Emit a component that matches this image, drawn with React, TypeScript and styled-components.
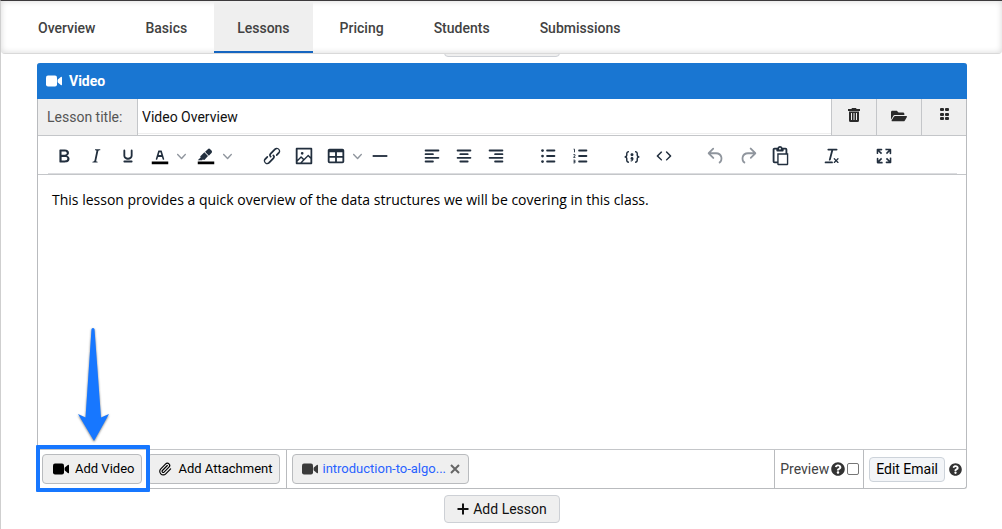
import React from "react";
import styled, { createGlobalStyle, css } from "styled-components";
import { FaFolderOpen, FaQuestionCircle } from "react-icons/fa";
import { Paperclip } from "lucide-react";

const line = "#c4c6c9";
const ink = "#222f3e";

const GlobalStyle = createGlobalStyle`
  * { box-sizing: border-box; }
  body {
    margin: 0;
    background: #fff;
    color: #333;
    font-family: Roboto, "Liberation Sans", sans-serif;
    font-size: 14px;
    line-height: 20px;
  }
  button, input { font: inherit; color: inherit; margin: 0; }
  button { cursor: pointer; }
  svg { display: block; flex: none; }
`;

const Page = styled.div`
  border-top: 1px solid #3c3a3c;
  border-left: 1px solid #cfcfcf;
  min-height: 100vh;
`;

const Tabs = styled.nav`
  display: flex;
  gap: 4px;
  height: 53px;
  padding-left: 14px;
  border-bottom: 1px solid #d9d9d9;
  border-radius: 0 0 4px 4px;
  box-shadow: inset 0 0 6px rgba(0, 0, 0, 0.16);
`;

const Tab = styled.a<{ $active?: boolean }>`
  display: flex;
  align-items: center;
  padding: 4px 23px 0;
  color: #424242;
  font-weight: 500;
  text-decoration: none;
  border-bottom: 2px solid transparent;
  ${(p) =>
    p.$active &&
    css`
      background: #efefef;
      border-bottom-color: #1565c0;
    `}
`;

const Main = styled.main`
  padding: 0 35px 0 36px;
`;

const ScrolledRow = styled.div`
  display: flex;
  justify-content: center;
  align-items: flex-end;
  height: 3px;
  margin-bottom: 6px;
  overflow: hidden;
`;

const SoftButton = styled.button`
  display: flex;
  align-items: center;
  justify-content: center;
  gap: 4px;
  width: 116px;
  height: 28px;
  flex: none;
  padding: 0;
  border: 1px solid #cdd0d5;
  border-radius: 4px;
  background: #efefef;
  color: #111;
`;

const Panel = styled.section`
  border: 1px solid #b9bbbe;
  border-top: 0;
  border-radius: 3px;
`;

const PanelHeader = styled.h2`
  display: flex;
  align-items: center;
  gap: 7px;
  height: 36px;
  margin: 0 -1px;
  padding: 0 9px;
  border-radius: 3px 3px 0 0;
  background: #1976d2;
  color: #fff;
  font-size: 14px;
  font-weight: 700;
`;

const TitleRow = styled.div`
  display: flex;
  height: 37px;
  border-bottom: 1px solid ${line};
`;

const TitleLabel = styled.label`
  display: flex;
  align-items: center;
  width: 100px;
  padding-left: 9px;
  border-right: 1px solid ${line};
  background: #efefef;
  color: #555;
`;

const TitleInput = styled.input`
  flex: 1;
  min-width: 0;
  margin-bottom: 1px;
  padding: 2px 4px 0;
  border: 0;
  border-bottom: 1px solid #eee;
  outline: 0;
  color: #111;
`;

const TitleAction = styled.button`
  display: flex;
  justify-content: center;
  width: 45px;
  padding: 9px 1px 0 0;
  border: 0;
  border-left: 1px solid ${line};
  background: #efefef;
  color: #2a2a2a;
`;

const ToolbarWrap = styled.div`
  padding: 0 9px 0 10px;
  border-bottom: 1px solid ${line};
`;

const Toolbar = styled.div`
  display: flex;
  gap: 20px;
  height: 38px;
  border-bottom: 1px solid #dcdde0;
`;

const ToolGroup = styled.div`
  display: flex;
`;

const Tool = styled.button<{ $width?: number; $muted?: boolean }>`
  display: flex;
  align-items: center;
  gap: 6px;
  width: ${(p) => p.$width ?? 32}px;
  padding: 3px 0 0 5px;
  border: 0;
  background: none;
  color: ${(p) => (p.$muted ? "#8f959d" : ink)};
`;

const Editor = styled.div`
  min-height: 274px;
  padding: 14px;
  color: #000;
  font-family: "Open Sans", "Noto Sans", sans-serif;
  font-size: 14px;
  line-height: 22px;
  outline: 0;
`;

const Footer = styled.div`
  display: flex;
  height: 39px;
  border-top: 1px solid ${line};
`;

const FooterCell = styled.div<{ $grow?: boolean; $gap: number }>`
  display: flex;
  align-items: center;
  gap: ${(p) => p.$gap}px;
  flex: ${(p) => (p.$grow ? "1" : "none")};
  padding: 0 4px 0 5px;
  & + & {
    border-left: 1px solid #b9bbbe;
  }
`;

const Actions = styled(FooterCell)`
  padding: 0 6px 0 4px;
`;

const FileButton = styled.button`
  display: flex;
  align-items: center;
  gap: 6px;
  height: 30px;
  padding: 0 7px 0 10px;
  border: 1px solid #b9bbbe;
  border-radius: 4px;
  background: #efefef;
  color: #000;
  font-size: 13px;
`;

const Chip = styled.div`
  display: flex;
  align-items: center;
  gap: 4px;
  height: 30px;
  width: 177px;
  padding: 0 8px 0 9px;
  border: 1px solid #b9bbbe;
  border-radius: 4px;
  background: #efefef;
  color: #3a3a3a;
`;

const ChipLink = styled.a`
  flex: 1;
  color: #2962ff;
  font-size: 13px;
  text-decoration: none;
  white-space: nowrap;
`;

const ChipClose = styled.button`
  padding: 0;
  border: 0;
  background: none;
  color: #666;
`;

const PreviewLabel = styled.label`
  color: #424242;
`;

const Check = styled.input`
  appearance: none;
  width: 12px;
  height: 12px;
  border: 1px solid #767676;
  border-radius: 2px;
  background: #fff;
`;

const EmailButton = styled.button`
  height: 25px;
  padding: 0 6px;
  border: 1px solid #cdd3da;
  border-radius: 4px;
  background: #f3f5f8;
  color: #000;
  line-height: 22px;
`;

const Highlighted = styled.div`
  position: relative;
`;

const HighlightBox = styled.div`
  position: absolute;
  z-index: 1;
  inset: -9px -8px -8px -6px;
  border: 4px solid #1777ff;
  border-radius: 1px;
  pointer-events: none;
`;

const Arrow = styled.svg`
  position: absolute;
  left: 34px;
  bottom: 43px;
  pointer-events: none;
  overflow: visible;
  filter: drop-shadow(0 1px 1px rgba(0, 0, 0, 0.5));
`;

const AddRow = styled.div`
  display: flex;
  justify-content: center;
  padding: 6px 0;
`;

const Icon = ({ children }: { children: React.ReactNode }) => (
  <svg width="22" height="22" viewBox="0 0 24 24" fill="currentColor" fillRule="evenodd">
    {children}
  </svg>
);

const Chevron = () => (
  <svg width="9" height="9" viewBox="0 0 10 10" fill="#8f959d">
    <path d="M8.7 2.2c.3-.3.8-.3 1 0 .4.4.4.9 0 1.2L5.7 7.8c-.3.3-.9.3-1.2 0L.2 3.4a.8.8 0 0 1 0-1.2c.3-.3.8-.3 1.1 0L5 6l3.7-3.8Z" />
  </svg>
);

type ToolDef = {
  name: string;
  icon: React.ReactNode;
  width?: number;
  menu?: boolean;
  muted?: boolean;
};

const row = (x: number, y: number, w: number) => (
  <rect key={y} x={x} y={y} width={w} height="2" rx="1" />
);

const groups: ToolDef[][] = [
  [
    {
      name: "Bold",
      icon: (
        <path d="M7.8 19c-.3 0-.5 0-.6-.2l-.2-.5V5.7c0-.2 0-.4.2-.5l.6-.2h5c1.5 0 2.7.3 3.5 1 .7.6 1.1 1.4 1.1 2.5a3 3 0 0 1-.6 1.9c-.4.6-1 1-1.6 1.2.4.1.9.3 1.3.6s.8.7 1 1.2c.4.4.5 1 .5 1.6 0 1.3-.4 2.3-1.3 3-.8.7-2.1 1-3.8 1H7.8Zm5-8.3c.6 0 1.2-.1 1.6-.5.4-.3.6-.7.6-1.3 0-1.1-.8-1.7-2.3-1.7H9.3v3.5h3.4Zm.5 6c.7 0 1.3-.1 1.7-.4.4-.4.6-.9.6-1.5s-.2-1-.7-1.4c-.4-.3-1-.4-2-.4H9.4v3.8h4Z" />
      ),
    },
    {
      name: "Italic",
      icon: (
        <path d="m16.7 4.7-.1.9h-.3c-.6 0-1 0-1.4.3-.3.3-.4.6-.5 1.1l-2.1 9.8v.6c0 .5.4.8 1.4.8h.2l-.2.8H8l.2-.8h.2c1.1 0 1.8-.5 2-1.5l2-9.8.1-.5c0-.6-.4-.8-1.4-.8h-.3l.2-.9h5.8Z" />
      ),
    },
    {
      name: "Underline",
      icon: (
        <path d="M16 5c.6 0 1 .4 1 1v5.5a4 4 0 0 1-.4 1.8l-1 1.4a5.3 5.3 0 0 1-5.5 1 5 5 0 0 1-1.6-1c-.5-.4-.8-.9-1.1-1.4a4 4 0 0 1-.4-1.8V6c0-.6.4-1 1-1s1 .4 1 1v5.5c0 .3 0 .6.2 1l.6.7a3.3 3.3 0 0 0 2.2.8 3.4 3.4 0 0 0 2.2-.8c.3-.2.4-.5.6-.8l.2-.9V6c0-.6.4-1 1-1ZM8 17h8c.6 0 1 .4 1 1s-.4 1-1 1H8a1 1 0 0 1 0-2Z" />
      ),
    },
    {
      name: "Text color",
      width: 46,
      menu: true,
      icon: (
        <>
          <path fill="#000" d="M3 18h18v3H3z" />
          <path d="M8.7 16h-.8a.5.5 0 0 1-.5-.6l2.7-9c.1-.3.3-.4.5-.4h2.8c.2 0 .4.1.5.4l2.7 9a.5.5 0 0 1-.5.6h-.8a.5.5 0 0 1-.4-.4l-.7-2.2c0-.3-.3-.4-.5-.4h-3.4c-.2 0-.4.1-.5.4l-.7 2.2c0 .3-.2.4-.4.4Zm2.6-7.6-.6 2a.5.5 0 0 0 .5.6h1.6a.5.5 0 0 0 .5-.6l-.6-2c0-.3-.3-.4-.5-.4h-.4c-.2 0-.4.1-.5.4Z" />
        </>
      ),
    },
    {
      name: "Background color",
      width: 46,
      menu: true,
      icon: (
        <>
          <path fill="#000" d="M3 18h18v3H3z" />
          <path d="M7.7 16.7H3l3.3-3.3-.7-.8L10.2 8l4 4.1-4 4.2c-.2.2-.6.2-.8 0l-.6-.7-1.1 1.1Zm5-7.5L11 7.4l3-2.9a2 2 0 0 1 2.6 0L18 6c.7.7.7 2 0 2.7l-2.9 2.9-1.8-1.8-.6-.6Z" />
        </>
      ),
    },
  ],
  [
    {
      name: "Link",
      icon: (
        <path d="M6.2 12.3a1 1 0 0 1 1.4 1.4l-2 2a2 2 0 1 0 2.6 2.8l4.8-4.8a1 1 0 0 0 0-1.4 1 1 0 1 1 1.4-1.3 2.9 2.9 0 0 1 0 4L9.6 20a3.9 3.9 0 0 1-5.5-5.5l2-2Zm11.6-.6a1 1 0 0 1-1.4-1.4l2-2a2 2 0 1 0-2.6-2.8L11 10.3a1 1 0 0 0 0 1.4A1 1 0 1 1 9.6 13a2.9 2.9 0 0 1 0-4L14.4 4a3.9 3.9 0 0 1 5.5 5.5l-2 2Z" />
      ),
    },
    {
      name: "Image",
      icon: (
        <path d="m5 15.7 3.3-3.2c.3-.3.7-.3 1 0L12 15l4.1-4c.3-.4.8-.4 1 0l2 1.9V5H5v10.7ZM5 18V19h3l2.8-2.9-2-2L5 17.9Zm14-3-2.5-2.4-6.4 6.5H19v-4ZM4 3h16c.6 0 1 .4 1 1v16c0 .6-.4 1-1 1H4a1 1 0 0 1-1-1V4c0-.6.4-1 1-1Zm6 7.500a1.500 1.500 0 1 1 0-3 1.500 1.500 0 0 1 0 3Z" />
      ),
    },
    {
      name: "Table",
      width: 44,
      menu: true,
      icon: (
        <path d="M19 4a2 2 0 0 1 2 2v12a2 2 0 0 1-2 2H5a2 2 0 0 1-2-2V6c0-1.100.9-2 2-2h14ZM5 14v4h6v-4H5Zm14 0h-6v4h6v-4Zm0-6h-6v4h6V8ZM5 12h6V8H5v4Z" />
      ),
    },
    { name: "Horizontal line", icon: <path d="M4 11h16v2H4z" /> },
  ],
  [
    {
      name: "Align left",
      icon: [row(4, 5, 16), row(4, 9, 10), row(4, 13, 16), row(4, 17, 10)],
    },
    {
      name: "Align center",
      icon: [row(4, 5, 16), row(7, 9, 10), row(4, 13, 16), row(7, 17, 10)],
    },
    {
      name: "Align right",
      icon: [row(4, 5, 16), row(10, 9, 10), row(4, 13, 16), row(10, 17, 10)],
    },
  ],
  [
    {
      name: "Bullet list",
      icon: (
        <>
          {[5, 11, 17].map((y) => row(10, y, 10))}
          {[6, 12, 18].map((y) => (
            <circle key={y} cx="6" cy={y} r="1.5" />
          ))}
        </>
      ),
    },
    {
      name: "Numbered list",
      icon: (
        <>
          {[5, 11, 17].map((y) => row(10, y, 10))}
          <path
            fill="none"
            stroke="currentColor"
            d="M5 4.500h1V8M4.800 10.500h1.700v1.200L5 13.500h2M4.800 16.500h1.700v3H4.800M5 18h1.500"
          />
        </>
      ),
    },
  ],
  [
    {
      name: "Code sample",
      icon: (
        <path d="M7.100 11a2.800 2.800 0 0 1-.8 2 2.800 2.800 0 0 1 .8 2v1.700c0 .3.1.6.4.8.2.3.5.4.8.4.3 0 .4.2.4.4v.8c0 .2-.1.4-.4.4-.7 0-1.400-.3-2-.8-.5-.6-.8-1.300-.8-2V15c0-.3-.1-.6-.4-.8-.2-.3-.5-.4-.8-.4a.4.4 0 0 1-.4-.4v-.8c0-.2.2-.4.4-.4.3 0 .6-.1.8-.4.3-.2.4-.5.4-.8V9.300c0-.7.3-1.400.8-2 .6-.5 1.300-.8 2-.8.3 0 .4.2.4.4v.8c0 .2-.1.4-.4.4-.3 0-.6.1-.8.4-.3.2-.4.5-.4.8V11Zm9.800 0V9.300c0-.3-.1-.6-.4-.8-.2-.3-.5-.4-.8-.4a.4.4 0 0 1-.4-.4V7c0-.2.1-.4.4-.4.7 0 1.400.3 2 .8.5.6.8 1.300.8 2V11c0 .3.1.6.4.8.2.3.5.4.8.4.2 0 .4.2.4.4v.8c0 .2-.2.4-.4.4-.3 0-.6.1-.8.4-.3.2-.4.5-.4.8v1.700c0 .7-.3 1.400-.8 2-.6.5-1.300.8-2 .8a.4.4 0 0 1-.4-.4v-.8c0-.2.1-.4.4-.4.3 0 .6-.1.8-.4.3-.2.4-.5.4-.8V15a2.800 2.800 0 0 1 .8-2 2.800 2.800 0 0 1-.8-2Zm-3.300-.4c0 .4-.1.8-.5 1.100-.3.3-.7.5-1.100.5-.4 0-.8-.2-1.100-.5-.4-.3-.5-.7-.5-1.100 0-.5.1-.9.5-1.200.3-.3.7-.4 1.100-.4.4 0 .8.1 1.100.4.4.3.5.7.5 1.200ZM12 13c.4 0 .8.1 1.100.5.4.3.5.7.5 1.100 0 1-.1 1.600-.5 2a3 3 0 0 1-1.100 1c-.4.3-.8.4-1.100.4a.5.5 0 0 1-.5-.5V17a3 3 0 0 0 1-.2l.6-.6c-.6 0-1-.2-1.300-.5-.2-.3-.3-.7-.3-1 0-.5.1-1 .5-1.200.3-.4.7-.5 1.100-.5Z" />
      ),
    },
    {
      name: "Source code",
      icon: (
        <path d="M9.800 15.700c.3.3.3.8 0 1-.3.4-.9.4-1.200 0l-4.400-4.100a.8.8 0 0 1 0-1.200l4.400-4.200c.3-.3.9-.3 1.200 0 .3.3.3.8 0 1.100L6 12l3.800 3.700ZM14.200 15.700c-.3.3-.3.8 0 1 .4.4.9.4 1.200 0l4.400-4.100c.3-.3.3-.9 0-1.200l-4.400-4.200a.8.8 0 0 0-1.200 0c-.3.3-.3.8 0 1.100L18 12l-3.800 3.700Z" />
      ),
    },
  ],
  [
    {
      name: "Undo",
      muted: true,
      icon: (
        <path d="M6.400 8H12c3.700 0 6.200 2 6.800 5.100.6 2.700-.4 5.600-2.300 6.800a1 1 0 0 1-1-1.800c1.100-.6 1.800-2.700 1.400-4.600-.5-2.100-2.100-3.500-4.900-3.500H6.400l3.300 3.300a1 1 0 1 1-1.400 1.400l-5-5a1 1 0 0 1 0-1.400l5-5a1 1 0 0 1 1.400 1.400L6.400 8Z" />
      ),
    },
    {
      name: "Redo",
      muted: true,
      icon: (
        <path d="M17.600 10H12c-2.800 0-4.400 1.400-4.900 3.500-.4 2 .3 4 1.400 4.600a1 1 0 1 1-1 1.800c-2-1.200-2.900-4.100-2.300-6.800.6-3 3-5.100 6.800-5.100h5.600l-3.300-3.300a1 1 0 1 1 1.400-1.400l5 5a1 1 0 0 1 0 1.400l-5 5a1 1 0 0 1-1.400-1.400l3.300-3.300Z" />
      ),
    },
    {
      name: "Paste",
      icon: (
        <path d="M18 9V5h-2v1c0 .6-.4 1-1 1H9a1 1 0 0 1-1-1V5H6v13h3V9h9ZM9 20H6a2 2 0 0 1-2-2V5c0-1.100.9-2 2-2h3.200A3 3 0 0 1 12 1a3 3 0 0 1 2.800 2H18a2 2 0 0 1 2 2v4h1v12.100c0 .5-.4.9-.9.9H9.900a.9.9 0 0 1-.9-.9V20Zm1.500-9.500v9.900h9v-9.900h-9ZM12 3a1 1 0 0 0-1 1c0 .5.4 1 1 1s1-.5 1-1-.4-1-1-1Z" />
      ),
    },
  ],
  [
    {
      name: "Clear formatting",
      icon: (
        <path d="M13.200 6a1 1 0 0 1 0 .2l-2.600 10a1 1 0 0 1-1 .8h-.2a.8.8 0 0 1-.8-1l2.600-10H8a1 1 0 1 1 0-2h9a1 1 0 0 1 0 2h-3.800ZM5 18h7a1 1 0 0 1 0 2H5a1 1 0 0 1 0-2Zm13 1.500L16.500 18 15 19.500a.7.7 0 0 1-1-1l1.500-1.500-1.500-1.500a.7.7 0 0 1 1-1l1.500 1.500 1.500-1.500a.7.7 0 0 1 1 1L17.500 17l1.500 1.500a.7.7 0 0 1-1 1Z" />
      ),
    },
  ],
  [
    {
      name: "Fullscreen",
      icon: (
        <path d="m15.300 10-1.200-1.300 2.900-3h-2.300a.9.9 0 1 1 0-1.700H19c.5 0 .9.4.9.9v4.400a.9.9 0 1 1-1.800 0V7l-2.900 3Zm0 4 3 3v-2.300a.9.9 0 1 1 1.700 0V19c0 .5-.4.9-.9.9h-4.400a.9.9 0 1 1 0-1.800H17l-3-2.900 1.300-1.200ZM10 15.400l-2.900 3h2.300a.9.9 0 1 1 0 1.700H5a.9.9 0 0 1-.9-.9v-4.400a.9.9 0 1 1 1.800 0V17l2.900-3 1.200 1.300ZM8.700 10 5.700 7v2.300a.9.9 0 0 1-1.700 0V5c0-.5.4-.9.9-.9h4.400a.9.9 0 0 1 0 1.800H7l3 2.900-1.300 1.200Z" />
      ),
    },
  ],
];

const VideoIcon = () => (
  <svg width="16" height="12" viewBox="0 0 16 12" fill="currentColor">
    <rect x="0" y="0.500" width="11" height="11" rx="2" />
    <path d="M11.600 4.800 14.800 2Q16 1.300 16 2.500V9.500Q16 10.700 14.800 10L11.600 7.200Z" />
  </svg>
);

const Trash = () => (
  <svg width="14" height="14" viewBox="0 0 14 14" fill="currentColor">
    <path d="M5 0h4l.6 1H13v2H1V1h3.400z" />
    <path
      fillRule="evenodd"
      d="M2 3.500h10V12.500a1.500 1.500 0 0 1-1.500 1.500h-7A1.500 1.500 0 0 1 2 12.500ZM4 5v7h1V5ZM6.500 5v7h1V5ZM9 5v7h1V5Z"
    />
  </svg>
);

const Grip = () => (
  <svg width="14" height="14" viewBox="0 0 14 14" fill="currentColor">
    {[0, 5, 9].map((y) => (
      <React.Fragment key={y}>
        <rect x="3" y={y} width="4" height="3" rx="1" />
        <rect x="8" y={y} width="4" height="3" rx="1" />
      </React.Fragment>
    ))}
  </svg>
);

const Plus = () => (
  <svg width="12" height="12" viewBox="0 0 12 12" stroke="currentColor" strokeWidth="2">
    <path d="M6 0.500v11M0.500 6h11" />
  </svg>
);

const Cross = () => (
  <svg width="10" height="10" viewBox="0 0 10 10" stroke="currentColor" strokeWidth="2">
    <path d="M1 1l8 8M9 1l-8 8" />
  </svg>
);

const tabs = ["Overview", "Basics", "Lessons", "Pricing", "Students", "Submissions"];

export default function App() {
  return (
    <Page>
      <GlobalStyle />
      <Tabs>
        {tabs.map((t) => (
          <Tab key={t} href="#" $active={t === "Lessons"}>
            {t}
          </Tab>
        ))}
      </Tabs>
      <Main>
        <ScrolledRow>
          <SoftButton aria-label="Add lesson above" />
        </ScrolledRow>
        <Panel>
          <PanelHeader>
            <VideoIcon />
            Video
          </PanelHeader>
          <TitleRow>
            <TitleLabel htmlFor="lesson-title">Lesson title:</TitleLabel>
            <TitleInput id="lesson-title" defaultValue="Video Overview" />
            <TitleAction aria-label="Delete">
              <Trash />
            </TitleAction>
            <TitleAction aria-label="Open folder">
              <FaFolderOpen size={16} />
            </TitleAction>
            <TitleAction aria-label="Move">
              <Grip />
            </TitleAction>
          </TitleRow>
          <ToolbarWrap>
            <Toolbar role="toolbar">
              {groups.map((group, i) => (
                <ToolGroup key={i}>
                  {group.map((t) => (
                    <Tool key={t.name} aria-label={t.name} $width={t.width} $muted={t.muted}>
                      <Icon>{t.icon}</Icon>
                      {t.menu && <Chevron />}
                    </Tool>
                  ))}
                </ToolGroup>
              ))}
            </Toolbar>
          </ToolbarWrap>
          <Editor contentEditable suppressContentEditableWarning>
            This lesson provides a quick overview of the data structures we will be covering in this
            class.
          </Editor>
          <Footer>
            <Actions $gap={5}>
              <Highlighted>
                <FileButton>
                  <VideoIcon />
                  Add Video
                </FileButton>
                <HighlightBox />
                <Arrow width="34" height="114" viewBox="0 0 34 114" fill="#1777ff">
                  <path d="M15.500 2Q17 0 18.500 2L25 90.500L33 87L18 114L2 87L9.500 90.500Z" />
                </Arrow>
              </Highlighted>
              <FileButton>
                <Paperclip size={14} />
                Add Attachment
              </FileButton>
            </Actions>
            <FooterCell $grow $gap={0}>
              <Chip>
                <VideoIcon />
                <ChipLink href="#">introduction-to-algo...</ChipLink>
                <ChipClose aria-label="Remove">
                  <Cross />
                </ChipClose>
              </Chip>
            </FooterCell>
            <FooterCell $gap={2}>
              <PreviewLabel htmlFor="preview">Preview</PreviewLabel>
              <FaQuestionCircle size={14} />
              <Check id="preview" type="checkbox" />
            </FooterCell>
            <FooterCell $gap={4}>
              <EmailButton>Edit Email</EmailButton>
              <FaQuestionCircle size={13} />
            </FooterCell>
          </Footer>
        </Panel>
        <AddRow>
          <SoftButton>
            <Plus />
            Add Lesson
          </SoftButton>
        </AddRow>
      </Main>
    </Page>
  );
}
